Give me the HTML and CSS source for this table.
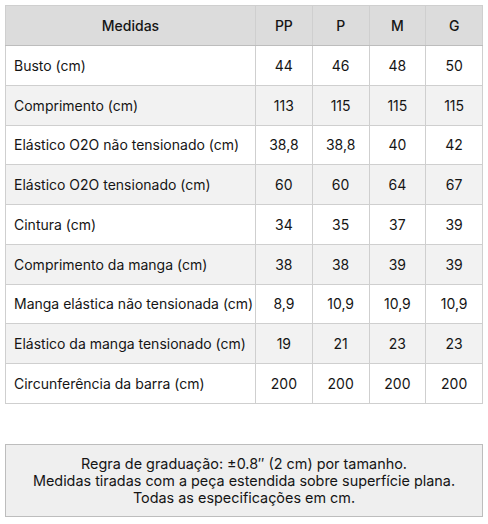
FILE: index.html
```html
<!DOCTYPE html>
<html lang="pt">
<head>
    <meta charset="UTF-8">
    <meta name="viewport" content="width=device-width, initial-scale=1.0">
    <title>Tabela de medidas</title>
    <link rel="stylesheet" href="styles.css">
</head>
<body>
    <table class="size-table">
        <thead>
            <tr>
                <th class="label-col">Medidas</th>
                <th>PP</th>
                <th>P</th>
                <th>M</th>
                <th>G</th>
            </tr>
        </thead>
        <tbody>
            <tr><td>Busto (cm)</td><td>44</td><td>46</td><td>48</td><td>50</td></tr>
            <tr><td>Comprimento (cm)</td><td>113</td><td>115</td><td>115</td><td>115</td></tr>
            <tr><td>Elástico O2O não tensionado (cm)</td><td>38,8</td><td>38,8</td><td>40</td><td>42</td></tr>
            <tr><td>Elástico O2O tensionado (cm)</td><td>60</td><td>60</td><td>64</td><td>67</td></tr>
            <tr><td>Cintura (cm)</td><td>34</td><td>35</td><td>37</td><td>39</td></tr>
            <tr><td>Comprimento da manga (cm)</td><td>38</td><td>38</td><td>39</td><td>39</td></tr>
            <tr><td>Manga elástica não tensionada (cm)</td><td>8,9</td><td>10,9</td><td>10,9</td><td>10,9</td></tr>
            <tr><td>Elástico da manga tensionado (cm)</td><td>19</td><td>21</td><td>23</td><td>23</td></tr>
            <tr><td>Circunferência da barra (cm)</td><td>200</td><td>200</td><td>200</td><td>200</td></tr>
        </tbody>
    </table>

    <div class="note">
        Regra de graduação: ±0.8″ (2 cm) por tamanho.<br>
        Medidas tiradas com a peça estendida sobre superfície plana.<br>
        Todas as especificações em cm.
    </div>
</body>
</html>
```

FILE: styles.css
```css
body {
    margin: 5px;
    font-family: Inter, "Noto Sans", sans-serif;
    font-size: 14px;
    color: #151515;
    background: #fff;
}

.size-table {
    width: 478px;
    border-collapse: collapse;
    table-layout: fixed;
    border: 1px solid #bdbdbd;
}

.size-table th,
.size-table td {
    border: 1px solid #cfcfcf;
    height: 39.75px;
    padding: 0 6px;
    text-align: center;
    white-space: nowrap;
    box-sizing: border-box;
}

.size-table th {
    background-color: #dcdcdc;
    font-weight: 500;
    height: 40px;
    border-bottom-color: #bdbdbd;
}

.size-table th.label-col {
    width: 250px;
}

.size-table td:first-child {
    text-align: left;
    padding-left: 8px;
}

.size-table tbody tr:nth-child(even) td {
    background-color: #f2f2f2;
}

.note {
    margin-top: 40px;
    padding: 10px 8px;
    background-color: #efefef;
    border: 1px solid #bdbdbd;
    font-size: 14.4px;
    text-align: center;
    line-height: 17px;
    width: 478px;
    box-sizing: border-box;
}
```
